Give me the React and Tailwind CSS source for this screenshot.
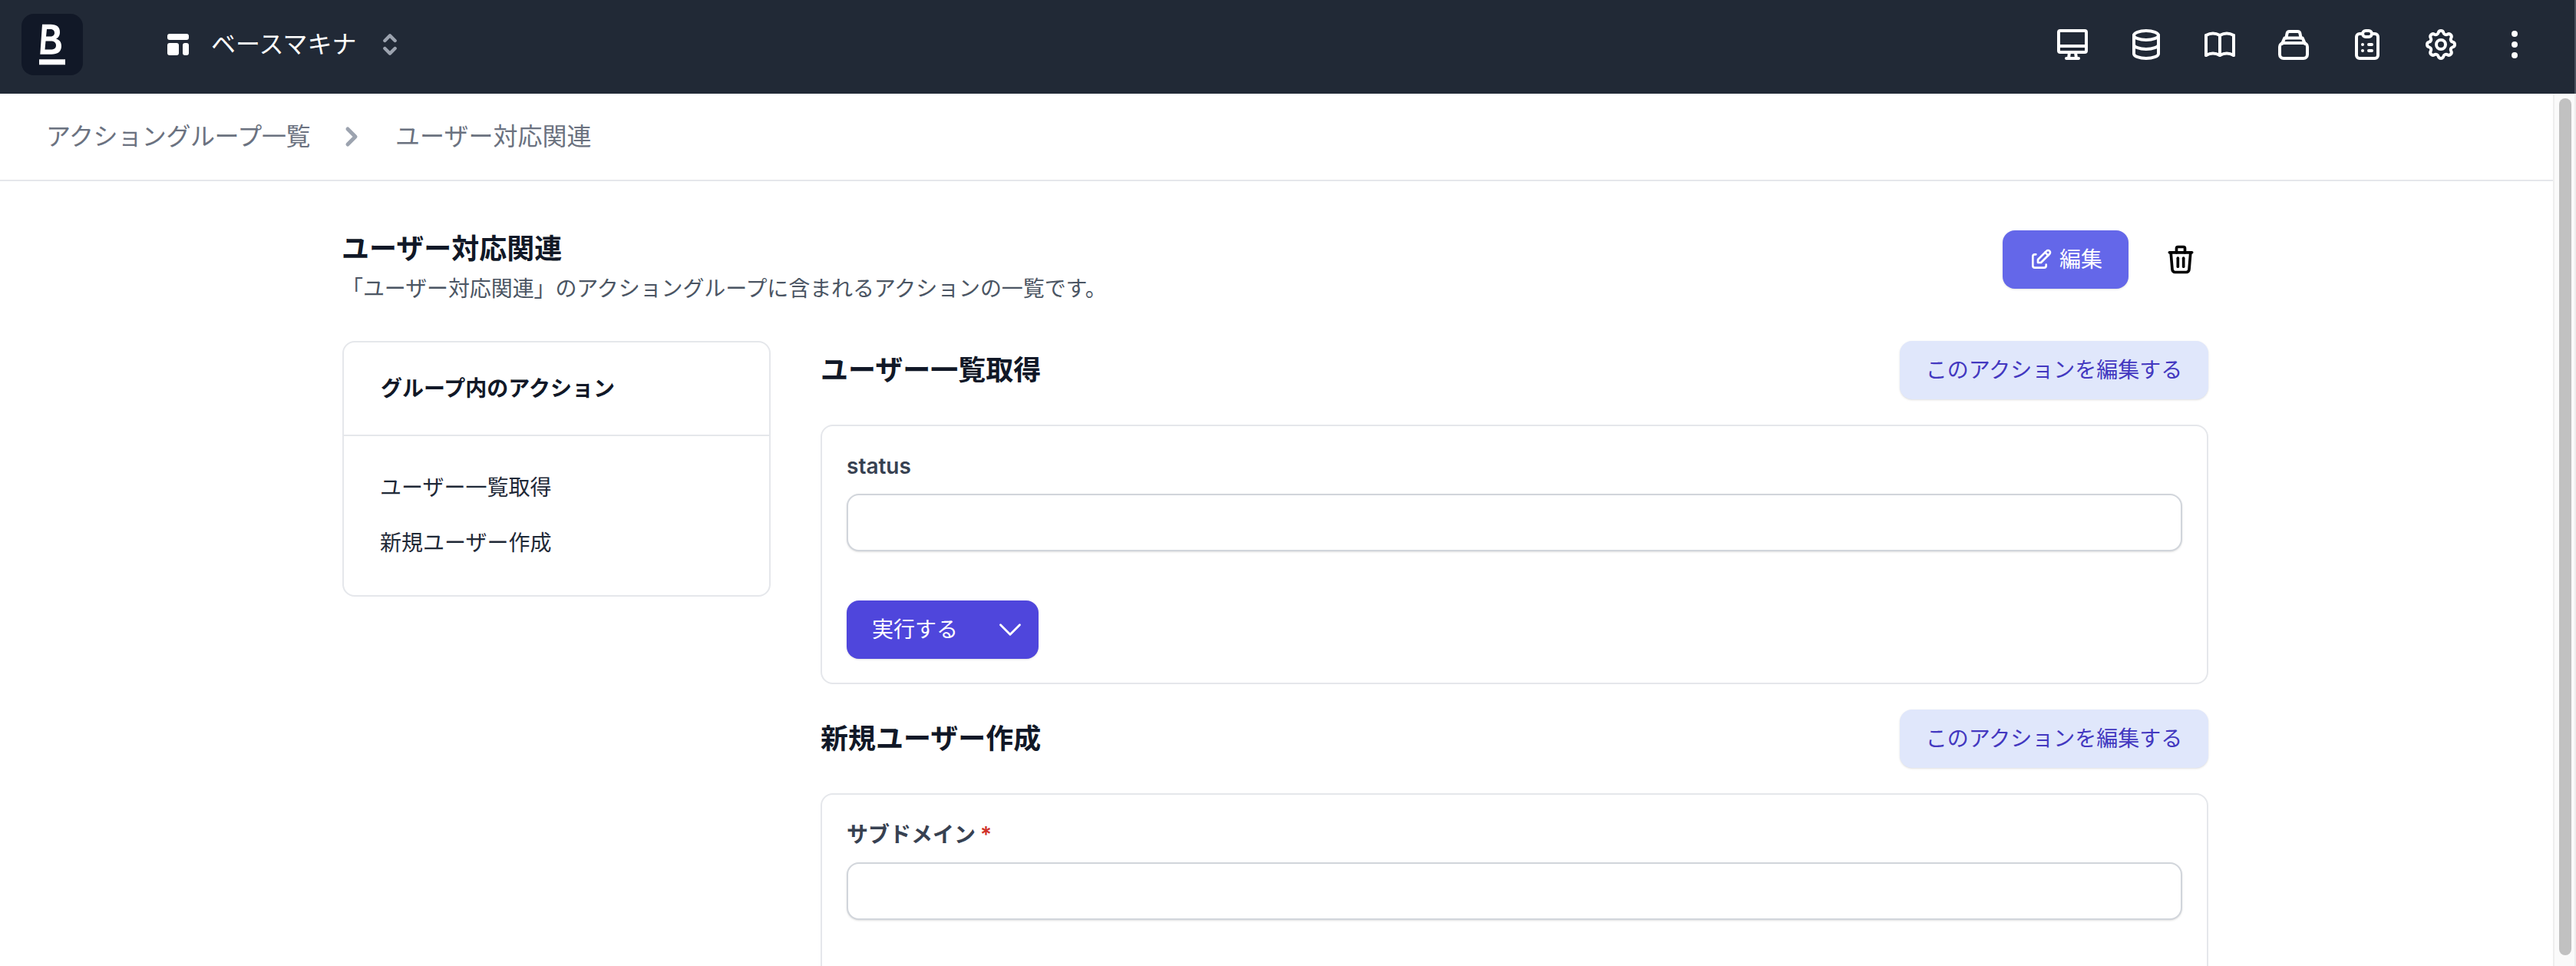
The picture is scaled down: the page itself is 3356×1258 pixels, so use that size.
import {
  TbBook,
  TbChevronRight,
  TbClipboardList,
  TbDatabase,
  TbDeviceImac,
  TbDotsVertical,
  TbEdit,
  TbSelector,
  TbSettings,
  TbTrash,
} from "react-icons/tb";

const LogoMark = () => (
  <svg viewBox="0 0 80 80" className="size-[80px] shrink-0">
    <rect width="80" height="80" rx="16" fill="#111827" />
    <path
      fill="#ffffff"
      fillRule="evenodd"
      d="M27 13.7H38C46 13.7 50 17 50 24C50 29 47.5 31.5 45 32.5C49 33.5 52 36.5 52 42C52 49.5 47 52.7 39 52.7H24.3ZM33 20L32 29.5H37.5C41 29.5 43 27.7 43 25C43 21.5 41 20 37.5 20ZM31.5 35.5L30.5 46.5H38C42.5 46.5 45 45 45 41C45 37.5 42.5 35.5 38 35.5Z"
    />
    <rect x="23" y="59.3" width="34" height="7" fill="#ffffff" />
  </svg>
);

const LayoutIcon = () => (
  <svg viewBox="0 0 32 32" className="size-[32px] shrink-0" fill="#ffffff">
    <rect x="2" y="2" width="28" height="8" rx="3" />
    <rect x="2" y="14" width="15" height="16" rx="3" />
    <rect x="22" y="14" width="8" height="16" rx="3" />
  </svg>
);

const StackIcon = () => (
  <svg
    viewBox="0 0 24 24"
    className="size-[48px]"
    fill="none"
    stroke="currentColor"
    strokeWidth="2"
    strokeLinecap="round"
    strokeLinejoin="round"
  >
    <rect x="3" y="11" width="18" height="10" rx="2.5" />
    <path d="M4.5 11.5l1.7 -3.8h11.6l1.7 3.8" />
    <path d="M7.2 7.7l.6 -3a1.5 1.5 0 0 1 1.5 -1.2h5.4a1.5 1.5 0 0 1 1.5 1.2l.6 3" />
  </svg>
);

const ChevronDown = () => (
  <svg
    viewBox="0 0 24 24"
    className="size-[40px]"
    fill="none"
    stroke="currentColor"
    strokeWidth="1.7"
    strokeLinecap="round"
    strokeLinejoin="round"
  >
    <path d="M19.5 8.25l-7.5 7.5-7.5-7.5" />
  </svg>
);

const Header = () => (
  <header className="flex h-[122px] shrink-0 items-start border-r-2 border-[#4a505c] bg-[#212936] pt-[18px] pr-[54px] pl-[28px]">
    <LogoMark />
    <div className="ml-[108px] flex h-[80px] items-center text-white">
      <LayoutIcon />
      <span className="ml-[27px] text-[32px] leading-[48px]">ベースマキナ</span>
      <TbSelector size={40} strokeWidth={2.6} className="ml-[24px] text-[#9ca3af]" />
    </div>
    <nav className="ml-auto flex h-[80px] items-center gap-[48px] text-white">
      <TbDeviceImac size={48} />
      <TbDatabase size={48} />
      <TbBook size={48} />
      <StackIcon />
      <TbClipboardList size={48} />
      <TbSettings size={48} />
      <TbDotsVertical size={48} />
    </nav>
  </header>
);

const Breadcrumb = () => (
  <div className="flex h-[114px] shrink-0 items-center border-b-2 border-[#e5e7eb] pl-[60px] text-[32px] text-[#6b7280]">
    <span className="tracking-[-0.4px]">アクショングループ一覧</span>
    <TbChevronRight size={40} strokeWidth={3} className="mr-[37px] ml-[34px] text-[#9ca3af]" />
    <span>ユーザー対応関連</span>
  </div>
);

const SectionHeader = ({ title }) => (
  <div className="flex h-[76px] items-center justify-between">
    <h2 className="text-[36px] leading-[48px] font-bold text-[#111827]">{title}</h2>
    <button className="h-[76px] w-[402px] rounded-2xl bg-[#e0e7fb] text-[28px] text-[#4338c0] shadow-sm">
      このアクションを編集する
    </button>
  </div>
);

const Field = ({ label, required }) => (
  <div>
    <label className="block text-[28px] leading-[40px] font-semibold text-[#374151]">
      {label}
      {required && <span className="ml-[6px] text-[#d03028]">*</span>}
    </label>
    <input
      type="text"
      className="mt-[16px] block h-[75px] w-full rounded-2xl border-2 border-[#d1d5db] bg-white shadow-sm"
    />
  </div>
);

const ActionGroupPage = () => (
  <main className="ml-[446px] w-[2431px] pt-[64px]">
    <div className="flex items-start justify-between">
      <div className="-ml-[1px]">
        <h1 className="text-[36px] leading-[48px] font-bold text-[#111827]">ユーザー対応関連</h1>
        <p className="mt-[8px] text-[28px] leading-[40px] tracking-[-0.1px] text-[#4b5563]">
          「ユーザー対応関連」のアクショングループに含まれるアクションの一覧です。
        </p>
      </div>
      <div className="mr-[2px] flex items-center gap-[34px]">
        <button className="flex h-[76px] w-[164px] items-center justify-center gap-[8px] rounded-2xl bg-[#6467e9] text-[28px] text-white shadow-sm">
          <TbEdit size={32} />
          編集
        </button>
        <button className="flex h-[76px] w-[68px] items-center justify-center text-black">
          <TbTrash size={44} />
        </button>
      </div>
    </div>

    <div className="mt-[48px] flex items-start gap-[65px]">
      <aside className="w-[558px] shrink-0 rounded-2xl border-2 border-[#e5e7eb]">
        <div className="flex h-[122px] items-center border-b-2 border-[#e5e7eb] pl-[48px] text-[28px] font-bold text-[#111827]">
          グループ内のアクション
        </div>
        <ul className="flex flex-col gap-[32px] pt-[47px] pb-[48px] pl-[47px] text-[28px] leading-[40px] text-[#1f2937]">
          <li>ユーザー一覧取得</li>
          <li>新規ユーザー作成</li>
        </ul>
      </aside>

      <div className="min-w-0 flex-1">
        <SectionHeader title="ユーザー一覧取得" />
        <section className="mt-[33px] rounded-2xl border-2 border-[#e5e7eb] px-[32px] pt-[32px] pb-[31px]">
          <Field label="status" />
          <button className="mt-[64px] flex h-[76px] w-[250px] items-center justify-between rounded-2xl bg-[#4f46dc] pr-[17px] pl-[33px] text-[28px] text-white shadow-sm">
            実行する
            <ChevronDown />
          </button>
        </section>

        <div className="mt-[33px]">
          <SectionHeader title="新規ユーザー作成" />
        </div>
        <section className="mt-[33px] rounded-2xl border-2 border-[#e5e7eb] px-[32px] pt-[32px] pb-[200px]">
          <Field label="サブドメイン" required />
        </section>
      </div>
    </div>
  </main>
);

const Scrollbar = () => (
  <div className="w-[30px] shrink-0 border-r-2 border-l-2 border-[#eeeeee] bg-[#fafafa] pt-[6px] pl-[6px]">
    <div className="h-[1116px] w-[16px] rounded-full bg-[#c1c1c1]" />
  </div>
);

export default function App() {
  return (
    <div className="flex h-screen w-full flex-col overflow-hidden bg-white font-['Inter','Noto_Sans_CJK_JP',sans-serif]">
      <Header />
      <div className="flex min-h-0 flex-1">
        <div className="min-w-0 flex-1 overflow-hidden">
          <Breadcrumb />
          <ActionGroupPage />
        </div>
        <Scrollbar />
      </div>
    </div>
  );
}
